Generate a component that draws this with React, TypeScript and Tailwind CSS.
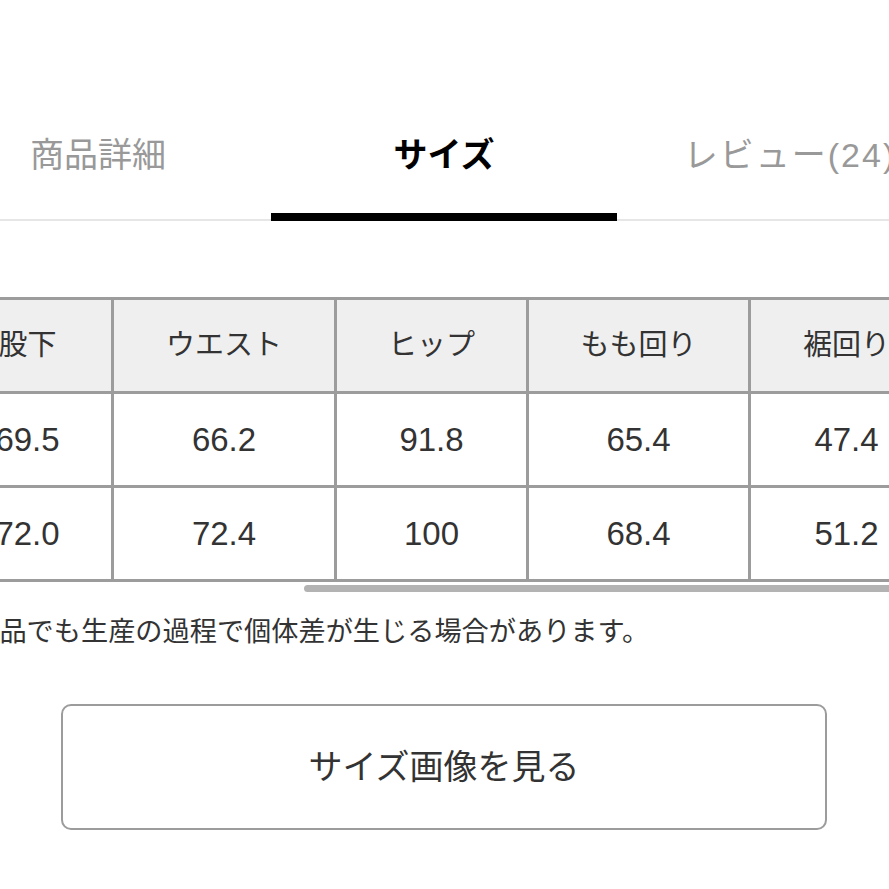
import React from 'react';

const font = { fontFamily: '"Liberation Sans", "Noto Sans CJK JP", sans-serif' };

const tabs = [
  { label: '商品詳細', active: false },
  { label: 'サイズ', active: true },
  { label: 'レビュー(24)', active: false },
];

const headers = ['股下', 'ウエスト', 'ヒップ', 'もも回り', '裾回り'];
const rows = [
  ['69.5', '66.2', '91.8', '65.4', '47.4'],
  ['72.0', '72.4', '100', '68.4', '51.2'],
];
const colWidths = ['w-[170px]', 'w-[223px]', 'w-[192px]', 'w-[222px]', 'w-[194px]'];

export default function App() {
  return (
    <div className="w-[889px] h-[889px] overflow-hidden bg-white text-[#333]" style={font}>
      {/* page is scrolled sideways a little, like the original capture */}
      <div className="w-[1038px] ml-[-75px]">
        {/* Tabs */}
        <div className="grid grid-cols-3">
          {tabs.map(t => (
            <div
              key={t.label}
              className={`h-[221px] flex justify-center pt-[134px] ${
                t.active ? 'border-b-[8px] border-black' : 'border-b-2 border-[#e6e6e6]'
              }`}
            >
              <span
                className={`text-[34px] leading-[42px] whitespace-nowrap ${
                  t.active ? 'font-bold text-black' : 'text-[#999]'
                } ${t.label.startsWith('レ') ? 'tracking-[2px]' : ''}`}
              >
                {t.label}
              </span>
            </div>
          ))}
        </div>

        {/* Size table */}
        <div className="mt-[76px] pl-[16px] overflow-hidden">
          <table className="table-fixed border-collapse">
            <colgroup>
              {colWidths.map((w, i) => (
                <col key={i} className={w} />
              ))}
            </colgroup>
            <thead>
              <tr>
                {headers.map(h => (
                  <th key={h} className="h-[94px] border-[3px] border-[#9c9c9c] bg-[#efefef] text-[29px] font-normal text-center whitespace-nowrap">
                    {h}
                  </th>
                ))}
              </tr>
            </thead>
            <tbody>
              {rows.map((r, i) => (
                <tr key={i}>
                  {r.map((v, j) => (
                    <td key={j} className="h-[94px] border-[3px] border-[#9c9c9c] text-[33px] text-center">
                      {v}
                    </td>
                  ))}
                </tr>
              ))}
            </tbody>
          </table>
        </div>

        {/* scroll thumb */}
        <div className="mt-[3px] ml-[379px] w-[680px] h-[7px] rounded-full bg-[#b3b3b3]" />

        {/* Note */}
        <p className="mt-[22px] pl-[20px] text-[27.2px] leading-[36px] whitespace-nowrap">
          ※商品でも生産の過程で個体差が生じる場合があります。
        </p>

        {/* Button */}
        <div className="mt-[54px] mx-[136px]">
          <button className="w-full h-[126px] rounded-[10px] border-2 border-[#9c9c9c] bg-white text-[34px] text-[#333]">
            サイズ画像を見る
          </button>
        </div>
      </div>
    </div>
  );
}
